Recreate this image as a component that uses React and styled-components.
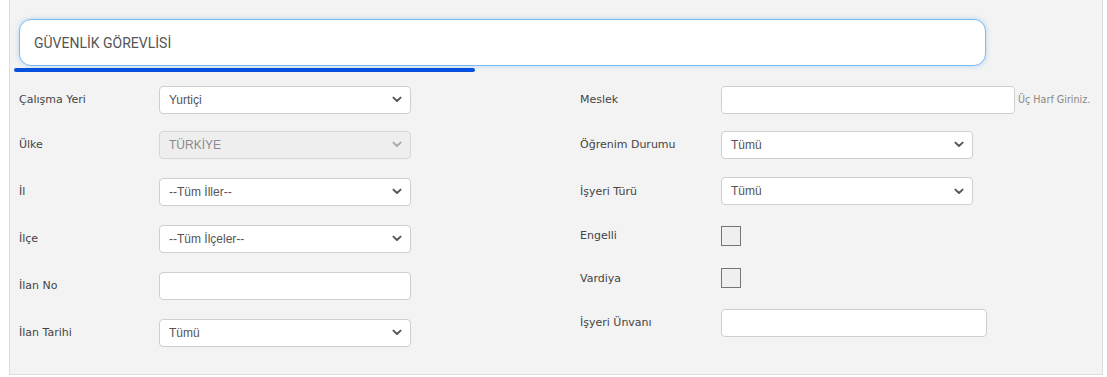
import React from 'react'
import styled, { createGlobalStyle } from 'styled-components'

const GlobalStyle = createGlobalStyle`
    html, body {
        margin: 0;
        padding: 0;
        background: #fff;
    }
    body {
        font-family: "DejaVu Sans", Verdana, sans-serif;
    }
`

const leftFields = [
    { label: 'Çalışma Yeri', type: 'select', value: 'Yurtiçi' },
    { label: 'Ülke', type: 'select', value: 'TÜRKİYE', disabled: true },
    { label: 'İl', type: 'select', value: '--Tüm İller--' },
    { label: 'İlçe', type: 'select', value: '--Tüm İlçeler--' },
    { label: 'İlan No', type: 'input' },
    { label: 'İlan Tarihi', type: 'select', value: 'Tümü' },
]

const rightFields = [
    { label: 'Meslek', type: 'input', width: 294, hint: 'Üç Harf Giriniz.', h: 47 },
    { label: 'Öğrenim Durumu', type: 'select', value: 'Tümü', h: 47 },
    { label: 'İşyeri Türü', type: 'select', value: 'Tümü', h: 46 },
    { label: 'Engelli', type: 'check', h: 43 },
    { label: 'Vardiya', type: 'check', h: 42 },
    { label: 'İşyeri Ünvanı', type: 'input', width: 266, h: 47 },
]

function Chevron() {
    return (
        <svg width="10" height="7" viewBox="0 0 10 7">
            <path d="M1.4 1.6 L5 5 L8.6 1.6" fill="none" stroke="currentColor" strokeWidth="1.9" strokeLinecap="round" strokeLinejoin="round"/>
        </svg>
    )
}

function Field({ field }) {
    if (field.type === 'select') {
        return (
            <Select $disabled={field.disabled}>
                <span>{field.value}</span>
                <Chevron/>
            </Select>
        )
    }
    if (field.type === 'check') {
        return <Check/>
    }
    return (
        <>
            <TextBox $width={field.width}/>
            {field.hint && <Hint>{field.hint}</Hint>}
        </>
    )
}

export default function App() {
    return (
        <>
            <GlobalStyle/>
            <Panel>
                <SearchWrap>
                    <SearchBox>GÜVENLİK GÖREVLİSİ</SearchBox>
                    <Underline/>
                </SearchWrap>
                <Form>
                    <Column $label={140}>
                        {leftFields.map((f, i) => (
                            <Row key={i} $h={47}>
                                <Label $w={140}>{f.label}</Label>
                                <Field field={f}/>
                            </Row>
                        ))}
                    </Column>
                    <Column>
                        {rightFields.map((f, i) => (
                            <Row key={i} $h={f.h}>
                                <Label $w={141}>{f.label}</Label>
                                <Field field={f}/>
                            </Row>
                        ))}
                    </Column>
                </Form>
            </Panel>
        </>
    )
}

const Panel = styled.div`
    margin-left: 9px;
    width: 1094px;
    height: 375px;
    box-sizing: border-box;
    background: #f3f3f3;
    border: 1px solid #dcdcdc;
    border-top: none;
    padding: 19px 0 0 9px;
`

const SearchWrap = styled.div`
    display: flex;
    flex-direction: column;
`

const SearchBox = styled.div`
    width: 967px;
    height: 47px;
    box-sizing: border-box;
    background: #fff;
    border: 1px solid #7fb8ec;
    border-radius: 12px;
    box-shadow: 0 0 5px rgba(102, 175, 233, 0.45);
    display: flex;
    align-items: center;
    padding-left: 14px;
    font-family: Roboto, "Liberation Sans", Arial, sans-serif;
    font-size: 14px;
    color: #555;
`

const Underline = styled.div`
    margin: 2px 0 0 -5px;
    width: 461px;
    height: 4px;
    border-radius: 2px;
    background: #0550dc;
`

const Form = styled.div`
    display: flex;
    margin-top: 6px;
`

const Column = styled.div`
    display: flex;
    flex-direction: column;
    width: ${p => p.$label ? '561px' : 'auto'};
`

const Row = styled.div`
    display: flex;
    align-items: center;
    height: ${p => p.$h}px;
    &:first-child {
        height: ${p => p.$h - 4}px;
    }
`

const Label = styled.div`
    width: ${p => p.$w}px;
    flex-shrink: 0;
    font-size: 11px;
    color: #444;
`

const Select = styled.div`
    width: 252px;
    height: 28px;
    box-sizing: border-box;
    border: 1px solid ${p => p.$disabled ? '#d6d6d6' : '#cfcfcf'};
    border-radius: 4px;
    background: ${p => p.$disabled ? '#eeeeee' : '#fff'};
    display: flex;
    align-items: center;
    justify-content: space-between;
    padding: 0 8px 0 9px;
    font-family: "Liberation Sans", Arial, sans-serif;
    font-size: 12px;
    color: ${p => p.$disabled ? '#8a8a8a' : '#555'};
    svg {
        color: ${p => p.$disabled ? '#aaa' : '#555'};
    }
`

const TextBox = styled.div`
    width: ${p => p.$width || 252}px;
    height: 28px;
    box-sizing: border-box;
    border: 1px solid #cfcfcf;
    border-radius: 4px;
    background: #fff;
`

const Hint = styled.span`
    margin-left: 3px;
    font-size: 9.6px;
    color: #888;
`

const Check = styled.div`
    width: 20px;
    height: 20px;
    box-sizing: border-box;
    border: 1px solid #767676;
    background: #efefef;
`
